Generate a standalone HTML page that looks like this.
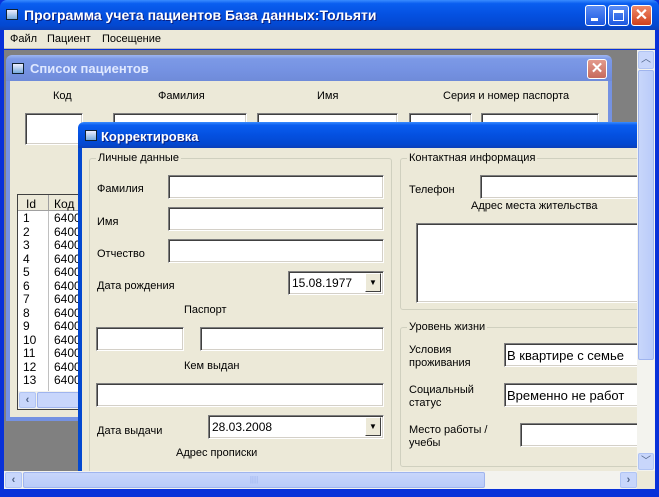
<!DOCTYPE html>
<html><head><meta charset="utf-8"><style>
*{box-sizing:border-box;margin:0;padding:0}
body{width:659px;height:497px;overflow:hidden;background:#0831d9;font-family:"Liberation Sans",sans-serif;font-size:11px;color:#000;position:relative}
.a{position:absolute}
.tb{background:linear-gradient(#3a8cff 0%,#0a5ef0 12%,#0450e0 50%,#0348d0 85%,#0b3fb8 100%)}
.tbi{background:linear-gradient(#9fb6f0 0%,#7c99e6 15%,#7592e2 60%,#6f8bd9 100%)}
.tt{color:#fff;font-weight:bold;font-size:13px;text-shadow:1px 1px 0 #0a1f80}
.in{background:#fff;border-style:solid;border-width:1px;border-color:#7f7f7f #fff #fff #7f7f7f;box-shadow:inset 1px 1px 0 #404040,inset -1px -1px 0 #d4d0c8}
.gb{border:1px solid #d0d0bf;border-radius:3px}
.gl{background:#ece9d8;padding:0 2px;position:absolute;top:-7px;left:6px}
.btn{border-radius:3px;border:1px solid #fff}
.dd{background:#ece9d8;border:1px solid;border-color:#fff #404040 #404040 #fff;width:16px}
.ic{width:12px;height:11px;background:linear-gradient(#eef 0%,#7ad 100%);border:1px solid #123}
</style></head><body>
<div class="a tb" style="left:0;top:0;width:659px;height:30px;border-radius:7px 7px 0 0"></div>
<div class="a ic" style="left:6px;top:9px"></div>
<div class="a tt" style="left:24px;top:7px;font-size:14px">Программа учета пациентов База данных:Тольяти</div>
<div class="a btn" style="left:585px;top:5px;width:21px;height:21px;background:linear-gradient(#5a8cf5,#1c58e0)"><div class="a" style="left:5px;top:12px;width:7px;height:3px;background:#fff"></div></div>
<div class="a btn" style="left:608px;top:5px;width:21px;height:21px;background:linear-gradient(#5a8cf5,#1c58e0)"><div class="a" style="left:4px;top:4px;width:11px;height:11px;border:1px solid #fff;border-top-width:3px"></div></div>
<div class="a btn" style="left:631px;top:5px;width:21px;height:21px;background:linear-gradient(#f08a6a,#d0401c);color:#fff;font-weight:bold;font-size:16px;text-align:center;line-height:19px">✕</div>
<div class="a" style="left:4px;top:30px;width:651px;height:19px;background:#ece9d8;border-bottom:1px solid #c0bdb0"></div>
<div class="a" style="left:10px;top:33px">Файл</div>
<div class="a" style="left:47px;top:33px">Пациент</div>
<div class="a" style="left:102px;top:33px">Посещение</div>
<div class="a" style="left:4px;top:50px;width:633px;height:421px;background:#808080"></div>

<div class="a tbi" style="left:6px;top:55px;width:606px;height:26px;border-radius:6px 6px 0 0"></div>
<div class="a ic" style="left:12px;top:63px"></div>
<div class="a tt" style="left:30px;top:61px;color:#dfe8ff;text-shadow:none">Список пациентов</div>
<div class="a" style="left:587px;top:59px;width:20px;height:20px;background:linear-gradient(#e39a8c,#c76a5c);border:1px solid #fff;border-radius:3px;color:#fff;font-weight:bold;font-size:15px;text-align:center;line-height:18px">✕</div>
<div class="a" style="left:6px;top:81px;width:606px;height:340px;background:#7592e2"></div>
<div class="a" style="left:10px;top:81px;width:598px;height:336px;background:#ece9d8"></div>
<div class="a" style="left:53px;top:90px">Код</div>
<div class="a" style="left:158px;top:90px">Фамилия</div>
<div class="a" style="left:317px;top:90px">Имя</div>
<div class="a" style="left:443px;top:90px">Серия и номер паспорта</div>
<div class="a in" style="left:25px;top:113px;width:58px;height:32px"></div>
<div class="a in" style="left:113px;top:113px;width:134px;height:12px"></div>
<div class="a in" style="left:257px;top:113px;width:141px;height:12px"></div>
<div class="a in" style="left:409px;top:113px;width:63px;height:12px"></div>
<div class="a in" style="left:481px;top:113px;width:118px;height:12px"></div>
<div class="a" style="left:17px;top:194px;width:64px;height:216px;border:1px solid #404040;background:#fff;overflow:hidden">
 <div class="a" style="left:0;top:0;width:62px;height:16px;background:#ece9d8;border-bottom:1px solid #a0a0a0"></div>
 <div class="a" style="left:8px;top:2px;font-size:12px">Id</div>
 <div class="a" style="left:36px;top:2px;font-size:12px">Код</div>
 <div class="a" style="left:30px;top:16px;width:1px;height:186px;background:#c0c0c0"></div>
 <div class="a" style="left:30px;top:0;width:1px;height:16px;background:#a0a0a0"></div>
 <div class="a" style="left:5px;top:17px;line-height:13.5px;font-size:12px">1<br>2<br>3<br>4<br>5<br>6<br>7<br>8<br>9<br>10<br>11<br>12<br>13</div>
 <div class="a" style="left:36px;top:17px;line-height:13.5px;font-size:12px">6400<br>6400<br>6400<br>6400<br>6400<br>6400<br>6400<br>6400<br>6400<br>6400<br>6400<br>6400<br>6400</div>
 <div class="a" style="left:0;top:196px;width:62px;height:18px;background:#f3f3ee"></div>
 <div class="a" style="left:1px;top:197px;width:17px;height:16px;background:#c8d6fb;border:1px solid #b0c4f4;border-radius:2px;color:#4d6185;font-weight:bold;text-align:center;line-height:14px">‹</div>
 <div class="a" style="left:19px;top:197px;width:50px;height:16px;background:#c8d6fb;border:1px solid #9fb4ee;border-radius:2px"></div>
</div>

<div class="a tb" style="left:78px;top:122px;width:560px;height:26px;border-radius:6px 0 0 0"></div>
<div class="a ic" style="left:85px;top:130px"></div>
<div class="a tt" style="left:101px;top:129px">Корректировка</div>
<div class="a" style="left:78px;top:148px;width:559px;height:323px;background:#0348d0"></div>
<div class="a" style="left:82px;top:148px;width:555px;height:323px;background:#ece9d8"></div>

<div class="a gb" style="left:89px;top:158px;width:303px;height:320px"><span class="gl">Личные данные</span></div>
<div class="a" style="left:97px;top:183px">Фамилия</div>
<div class="a in" style="left:168px;top:175px;width:216px;height:24px"></div>
<div class="a" style="left:97px;top:216px">Имя</div>
<div class="a in" style="left:168px;top:207px;width:216px;height:24px"></div>
<div class="a" style="left:97px;top:248px">Отчество</div>
<div class="a in" style="left:168px;top:239px;width:216px;height:24px"></div>
<div class="a" style="left:97px;top:280px">Дата рождения</div>
<div class="a in" style="left:288px;top:271px;width:96px;height:24px"><span class="a" style="left:3px;top:4px;font-size:12px">15.08.1977</span><div class="a dd" style="left:76px;top:1px;height:19px;text-align:center;font-size:8px;line-height:18px">▼</div></div>
<div class="a" style="left:184px;top:304px">Паспорт</div>
<div class="a in" style="left:96px;top:327px;width:88px;height:24px"></div>
<div class="a in" style="left:200px;top:327px;width:184px;height:24px"></div>
<div class="a" style="left:184px;top:360px">Кем выдан</div>
<div class="a in" style="left:96px;top:383px;width:288px;height:24px"></div>
<div class="a" style="left:97px;top:425px">Дата выдачи</div>
<div class="a in" style="left:208px;top:415px;width:176px;height:24px"><span class="a" style="left:3px;top:4px;font-size:12px">28.03.2008</span><div class="a dd" style="left:156px;top:1px;height:19px;text-align:center;font-size:8px;line-height:18px">▼</div></div>
<div class="a" style="left:176px;top:447px">Адрес прописки</div>

<div class="a gb" style="left:400px;top:158px;width:245px;height:152px"><span class="gl">Контактная информация</span></div>
<div class="a" style="left:409px;top:184px">Телефон</div>
<div class="a in" style="left:480px;top:175px;width:160px;height:24px"></div>
<div class="a" style="left:471px;top:200px">Адрес места жительства</div>
<div class="a in" style="left:416px;top:223px;width:224px;height:80px"></div>

<div class="a gb" style="left:400px;top:327px;width:245px;height:140px"><span class="gl">Уровень жизни</span></div>
<div class="a" style="left:409px;top:344px;line-height:13px">Условия<br>проживания</div>
<div class="a in" style="left:504px;top:343px;width:136px;height:24px"><span class="a" style="left:2px;top:4px;font-size:13px;white-space:nowrap">В квартире с семье</span></div>
<div class="a" style="left:409px;top:384px;line-height:13px">Социальный<br>статус</div>
<div class="a in" style="left:504px;top:383px;width:136px;height:24px"><span class="a" style="left:2px;top:4px;font-size:13px;white-space:nowrap">Временно не работ</span></div>
<div class="a" style="left:409px;top:424px;line-height:13px">Место работы /<br>учебы</div>
<div class="a in" style="left:520px;top:423px;width:120px;height:24px"></div>

<div class="a" style="left:655px;top:30px;width:4px;height:467px;background:#0831d9"></div>
<div class="a" style="left:637px;top:50px;width:18px;height:421px;background:#f3f3ee"></div>
<div class="a" style="left:638px;top:51px;width:16px;height:18px;background:#c8d6fb;border:1px solid #b0c4f4;border-radius:2px;color:#4d6185;text-align:center;font-size:10px;line-height:15px">︿</div>
<div class="a" style="left:638px;top:70px;width:16px;height:290px;background:linear-gradient(90deg,#c8d6fb,#b9cbf9);border:1px solid #9fb4ee;border-radius:2px"></div>
<div class="a" style="left:638px;top:453px;width:16px;height:17px;background:#c8d6fb;border:1px solid #b0c4f4;border-radius:2px;color:#4d6185;text-align:center;font-size:10px;line-height:15px">﹀</div>
<div class="a" style="left:4px;top:471px;width:651px;height:18px;background:#f3f3ee"></div>
<div class="a" style="left:5px;top:472px;width:17px;height:16px;background:#c8d6fb;border:1px solid #b0c4f4;border-radius:2px;color:#4d6185;font-weight:bold;text-align:center;line-height:14px">‹</div>
<div class="a" style="left:23px;top:472px;width:462px;height:16px;background:linear-gradient(#c8d6fb,#b9cbf9);border:1px solid #9fb4ee;border-radius:2px;text-align:center;color:#9fb4ee;font-size:8px;line-height:14px">||||</div>
<div class="a" style="left:620px;top:472px;width:17px;height:16px;background:#c8d6fb;border:1px solid #b0c4f4;border-radius:2px;color:#4d6185;font-weight:bold;text-align:center;line-height:14px">›</div>
<div class="a" style="left:637px;top:471px;width:18px;height:18px;background:#ece9d8"></div>
</body></html>
